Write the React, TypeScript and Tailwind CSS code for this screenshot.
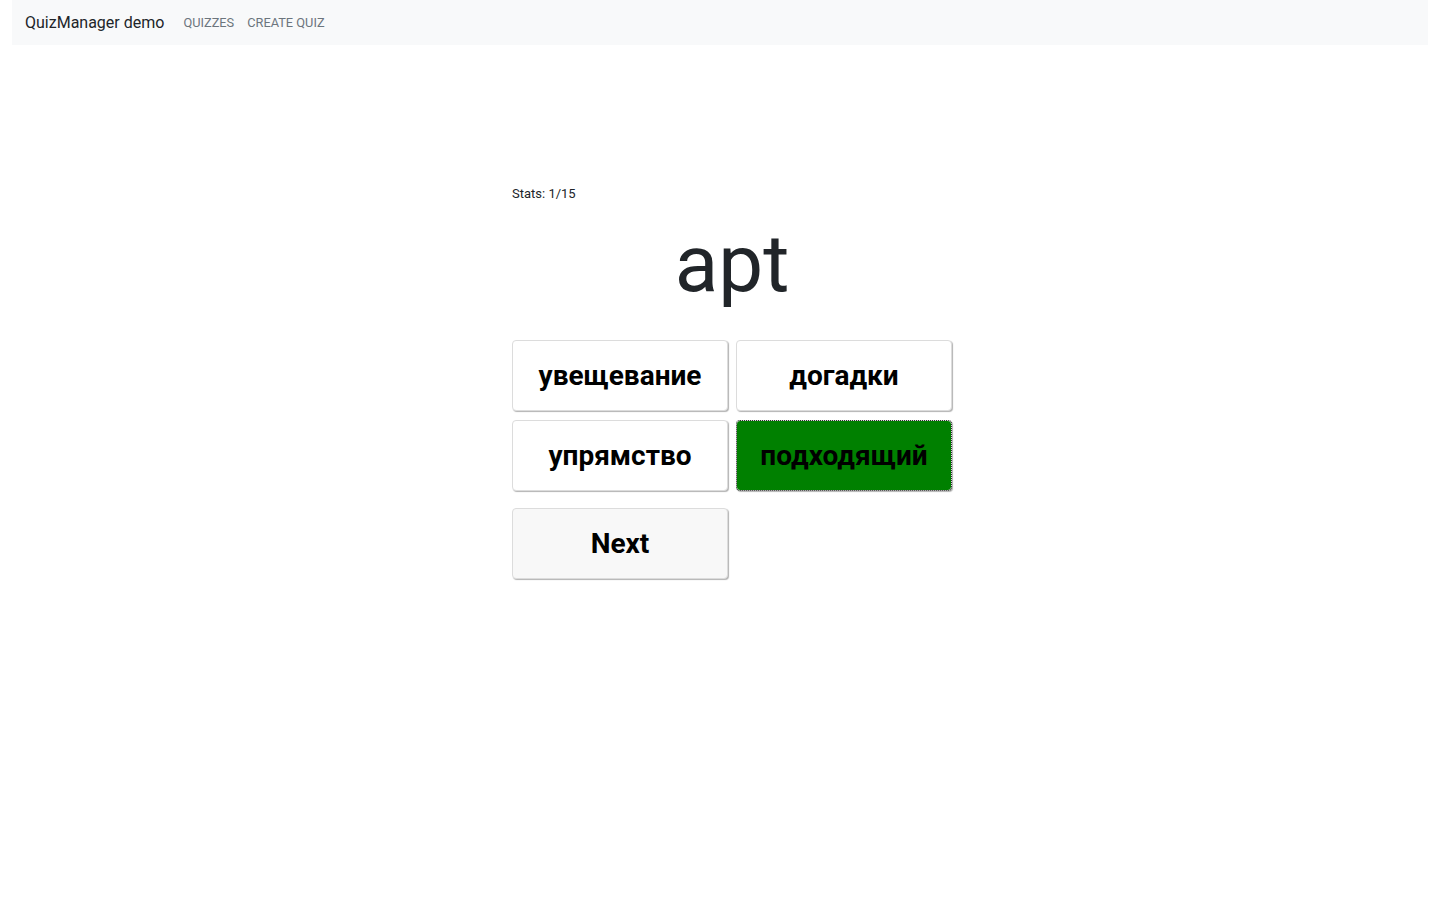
import React from "react";

function Choice({ label, green }: { label: string; green?: boolean }) {
  return (
    <button
      className={
        "h-[71px] w-[216px] rounded-[4px] border border-[#dcdcdc] shadow-[1px_1px_1px_rgba(0,0,0,0.3)] text-[28px] font-bold text-black " +
        (green ? "bg-[#008000] outline-1 outline-dotted outline-[#333] -outline-offset-1" : "bg-white")
      }
    >
      {label}
    </button>
  );
}

export default function App() {
  return (
    <div className="min-h-[900px] bg-white font-['Roboto',sans-serif] text-[#212529]">
      <div className="px-3">
        <nav className="flex h-[45px] items-center bg-[#f8f9fa] px-[13px]">
          <span className="text-[16px] text-[#212529]">QuizManager demo</span>
          <span className="ml-[19px] text-[12.8px] text-[#6c757d]">QUIZZES</span>
          <span className="ml-[13px] text-[12.8px] text-[#6c757d]">CREATE QUIZ</span>
        </nav>
      </div>
      <div className="ml-[512px] mt-[141px] w-[440px]">
        <div className="text-[13px] leading-[15px]">Stats: 1/15</div>
        <div className="mt-[13px] text-center text-[80px] leading-[100px]">apt</div>
        <div className="mt-[26px] grid grid-cols-[216px_216px] gap-x-[8px] gap-y-[9px]">
          <Choice label="увещевание" />
          <Choice label="догадки" />
          <Choice label="упрямство" />
          <Choice label="подходящий" green />
        </div>
        <button className="mt-[17px] h-[71px] w-[216px] rounded-[4px] border border-[#dcdcdc] bg-[#f8f8f8] shadow-[1px_1px_1px_rgba(0,0,0,0.3)] text-[28px] font-bold text-black">
          Next
        </button>
      </div>
    </div>
  );
}
